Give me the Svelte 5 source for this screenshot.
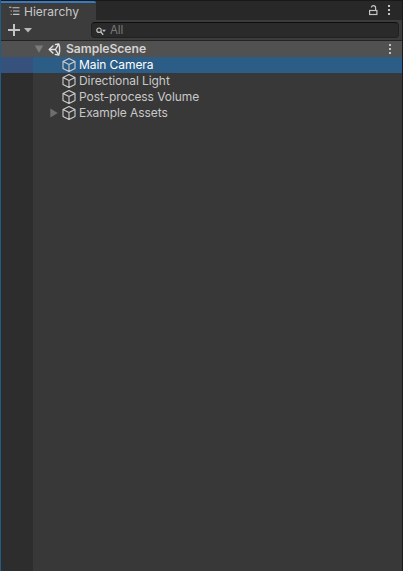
<script>
  const items = [
    { name: 'Main Camera', selected: true },
    { name: 'Directional Light' },
    { name: 'Post-process Volume' },
    { name: 'Example Assets', children: true }
  ];
</script>

{#snippet dots()}
  <svg class="dots" width="4" height="12" viewBox="0 0 4 12" fill="#c4c4c4">
    <rect x="1" y="1" width="2" height="2" /><rect x="1" y="5" width="2" height="2" /><rect x="1" y="9" width="2" height="2" />
  </svg>
{/snippet}

<div class="panel">
  <header class="tabs">
    <div class="tab">
      <svg width="12" height="10" viewBox="0 0 12 10" fill="none" stroke="#c4c4c4">
        <path d="M0 1.3H2.5M3.5 1.7H10.5M4 5H10.5M4 8.4H10.5" stroke-width="1.1" />
        <path d="M1.5 5H3M1.5 8.4H3" opacity=".7" />
      </svg>
      <span>Hierarchy</span>
    </div>
    <svg class="lock" width="9" height="11" viewBox="0 0 9 11" fill="none" stroke="#c4c4c4">
      <rect x=".6" y="5.5" width="7.3" height="4" stroke-width="1.2" />
      <path d="M2.5 2.5V2Q2.8 .6 4.4 .6Q6.6 .6 6.6 2.8V5.5" stroke-width="1.2" />
    </svg>
    {@render dots()}
  </header>

  <div class="toolbar">
    <svg class="add" width="26" height="14" viewBox="0 0 26 14">
      <path d="M7 1V13M1 7H13" stroke="#c4c4c4" stroke-width="2" />
      <path d="M17 5H25L21 9.5Z" fill="#b8b8b8" />
    </svg>
    <div class="search">
      <svg width="11" height="9" viewBox="0 0 11 9" fill="none" stroke="#c0c0c0">
        <circle cx="3" cy="3.2" r="2.2" stroke-width="1.2" />
        <path d="M4.6 4.8L7.2 7.7" stroke-width="1.4" />
        <path d="M6 2.7H10L8 5Z" fill="#c0c0c0" stroke="none" />
      </svg>
      <span>All</span>
    </div>
  </div>

  <div class="scene">
    <svg class="fold" width="10" height="8" viewBox="0 0 10 8"><path d="M.7 .5H9.3L5 7.7Z" fill="#7b7b7b" /></svg>
    <svg class="unity" width="13" height="13" viewBox="0 0 13 13" fill="none" stroke="#e2e2e2" stroke-linejoin="round">
      <path d="M5.4 2.4L1.2 6.5L5.4 10.6M6.8 1.6L10.8 1L11.6 4.4V8.6L10.8 12L6.8 11.4" stroke-width="1.4" />
      <path d="M1.2 6.5H7.4L10.6 1.4M7.4 6.5L10.6 11.6" stroke-width="1.4" />
    </svg>
    <span>SampleScene</span>
    {@render dots()}
  </div>

  <main class="tree">
    {#each items as item}
      <div class="row" class:selected={item.selected}>
        <div class="gutter"></div>
        <div class="arrow">
          {#if item.children}
            <svg width="8" height="10" viewBox="0 0 8 10"><path d="M.3 .5L7.8 5L.3 9.5Z" fill="#6e6e6e" /></svg>
          {/if}
        </div>
        <svg class="cube" width="14" height="14" viewBox="0 0 14 14" fill="none" stroke="#cecece" stroke-width="1.1" stroke-linejoin="round">
          <path d="M7 .6L13 3.4V10.5L7 13.4L1 10.5V3.4ZM1 3.4L7 6.4L13 3.4M7 6.4V13.4" />
        </svg>
        <span>{item.name}</span>
      </div>
    {/each}
    <div class="empty"><div class="gutter"></div></div>
  </main>
</div>

<style>
  :global(body) { background: #383838; }
  .panel {
    box-sizing: border-box;
    width: 403px;
    height: 571px;
    display: flex;
    flex-direction: column;
    background: #383838;
    border-left: 1px solid #235a86;
    border-right: 1px solid #191919;
    color: #c8c8c8;
    font: 12px/16px Inter, sans-serif;
    letter-spacing: -.07px;
    overflow: hidden;
  }
  svg { display: block; flex: none; }
  span { white-space: nowrap; }
  .tabs {
    box-sizing: border-box;
    height: 20px;
    flex: none;
    display: flex;
    align-items: flex-start;
    background: #282828;
    border-top: 1px solid #191919;
  }
  .tab {
    box-sizing: border-box;
    width: 95px;
    height: 19px;
    display: flex;
    padding-left: 8px;
    background: #3c3c3c;
    border-top: 2px solid #3a79bb;
    border-radius: 0 2px 0 0;
  }
  .tab svg { margin-top: 3px; }
  .tab span { margin: 1px 0 0 3px; letter-spacing: 0; }
  .lock { margin: 4px 0 0 auto; }
  .tabs .dots { margin: 3px 11px 0 9px; }
  .toolbar {
    box-sizing: border-box;
    height: 21px;
    flex: none;
    display: flex;
    align-items: flex-start;
    background: #3c3c3c;
    border-bottom: 1px solid #232323;
  }
  .add { margin: 3px 0 0 6px; }
  .search {
    box-sizing: border-box;
    width: 308px;
    height: 16px;
    margin: 2px 0 0 58px;
    display: flex;
    padding-left: 4px;
    background: #2a2a2a;
    border: 1px solid #212121;
    border-top-color: #0d0d0d;
    border-radius: 4px;
  }
  .search svg { margin-top: 4px; }
  .search span { margin-left: 3px; line-height: 15px; font-size: 11.5px; color: #7b7b7b; }
  .scene {
    height: 16px;
    flex: none;
    display: flex;
    align-items: center;
    background: #515151;
    color: #d4d4d4;
    font-weight: 600;
    font-size: 12.2px;
  }
  .fold { margin-left: 33px; }
  .unity { margin: 0 5px 0 4px; }
  .scene .dots { margin: 0 10px 0 auto; }
  .tree { flex: 1; display: flex; flex-direction: column; }
  .row { height: 16px; flex: none; display: flex; align-items: center; }
  .gutter { width: 32px; align-self: stretch; background: #2d2d2d; }
  .arrow { width: 12px; padding-left: 16.5px; }
  .cube { margin-right: 3.5px; }
  .selected { background: #2c5d87; color: #fff; }
  .selected .gutter { background: #35517c; }
  .empty { flex: 1; display: flex; }
</style>
